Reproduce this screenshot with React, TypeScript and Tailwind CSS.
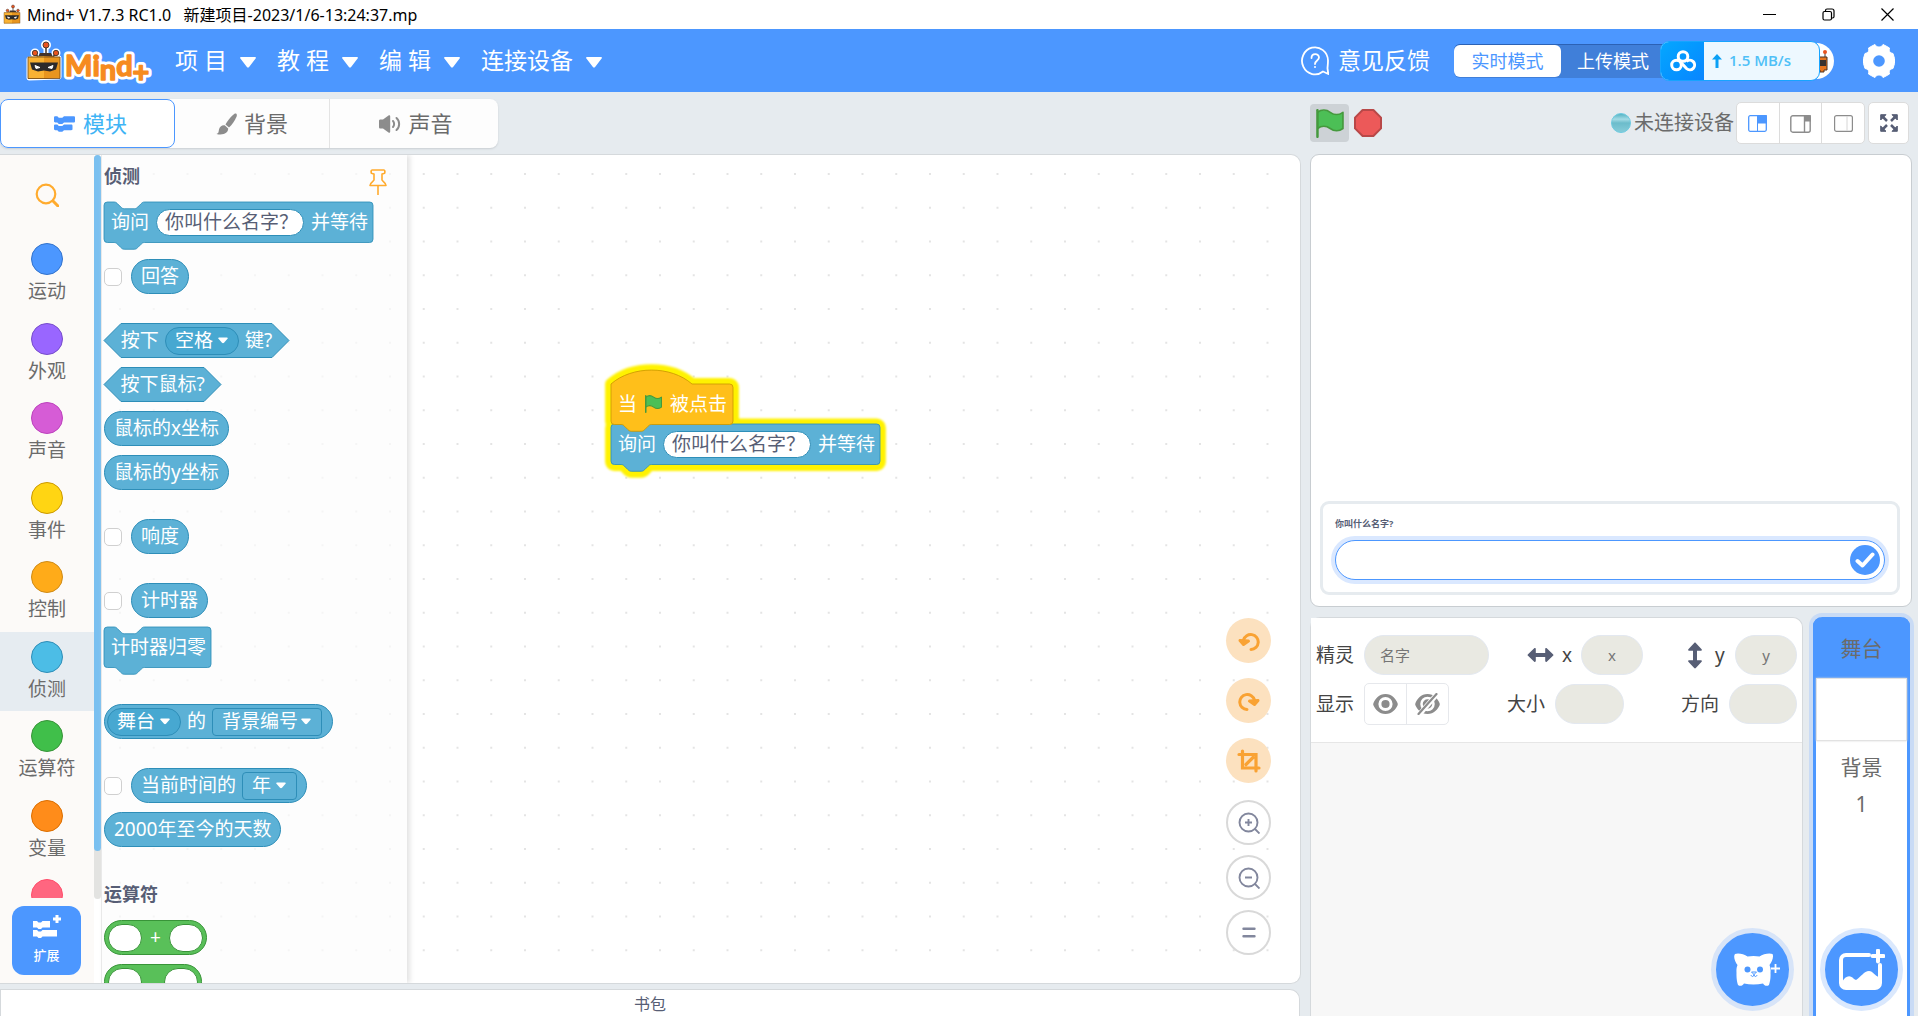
import type { ReactNode } from "react";

// One Blockly unit on screen at the current workspace zoom.
const ZOOM = 0.84375;

const NOTCH_TOP =
  "c2 0 3 1 4 2l4 4c1 1 2 2 4 2h12c2 0 3-1 4-2l4-4c1-1 2-2 4-2";
const NOTCH_BOTTOM =
  "c-2 0-3 1-4 2l-4 4c-1 1-2 2-4 2h-12c-2 0-3-1-4-2l-4-4c-1-1-2-2-4-2";

const CATEGORIES = [
  { label: "运动", dot: "bg-[#4c97ff] border-[#3373cc]" },
  { label: "外观", dot: "bg-[#9966ff] border-[#774dcb]" },
  { label: "声音", dot: "bg-[#d65cd6] border-[#bd42bd]" },
  { label: "事件", dot: "bg-[#ffd513] border-[#cc9900]" },
  { label: "控制", dot: "bg-[#ffab19] border-[#cf8b17]" },
  { label: "侦测", dot: "bg-[#4cbde6] border-[#2e8eb8]", selected: true },
  { label: "运算符", dot: "bg-[#40bf4a] border-[#389438]" },
  { label: "变量", dot: "bg-[#ff8c1a] border-[#db6e00]" },
  { label: "", dot: "bg-[#ff6680] border-[#ff4d6a]" },
];

const MENUS = ["项 目", "教 程", "编 辑", "连接设备"];

function stackPath(width: number) {
  const w = width / ZOOM;
  return `M0 4a4 4 0 0 1 4-4h8${NOTCH_TOP}H${w - 4}a4 4 0 0 1 4 4v40a4 4 0 0 1-4 4H48${NOTCH_BOTTOM}H4a4 4 0 0 1-4-4z`;
}

function hatPath(width: number) {
  const w = width / ZOOM;
  return `M0 0c25-22 71-22 96 0H${w - 4}a4 4 0 0 1 4 4v40a4 4 0 0 1-4 4H48${NOTCH_BOTTOM}H4a4 4 0 0 1-4-4z`;
}

function Caret() {
  return (
    <svg viewBox="0 0 10 7" className="h-[7px] w-[10px]" aria-hidden>
      <path d="M1 .5h8c.8 0 1 .8.5 1.3L6 5.8c-.6.6-1.4.6-2 0L.5 1.8C0 1.3.2.5 1 .5z" fill="#fff" />
    </svg>
  );
}

function Flag({ className }: { className: string }) {
  return (
    <svg viewBox="0 0 16.63 17.5" className={className} aria-hidden>
      <path
        d="M.75 2A6.44 6.44 0 0 1 8.44 2a6.44 6.44 0 0 0 7.69 0v9.76a6.44 6.44 0 0 1-7.69 0 6.44 6.44 0 0 0-7.69 0"
        fill="#4cbf56"
        stroke="#45993d"
        strokeLinejoin="round"
      />
      <path d="M.75 16.8V.7" stroke="#45993d" strokeWidth="1.5" strokeLinecap="round" />
    </svg>
  );
}

function StackBlock({ width, children }: { width: number; children: ReactNode }) {
  return (
    <div className="relative h-12" style={{ width }}>
      <svg className="absolute inset-0 h-full w-full overflow-visible" aria-hidden>
        <path d={stackPath(width)} transform={`scale(${ZOOM})`} fill="#5cb1d6" stroke="#2e8eb8" />
      </svg>
      <div className="relative flex h-[41px] items-center gap-[7px] whitespace-nowrap px-[7px]">
        {children}
      </div>
    </div>
  );
}

function AskBlock({ id }: { id: string }) {
  return (
    <StackBlock width={269}>
      <label htmlFor={id}>询问</label>
      <input
        id={id}
        defaultValue="你叫什么名字？"
        className="h-[27px] w-[148px] rounded-full border border-[#2e8eb8] bg-white pl-2 text-[#575e75] outline-none"
      />
      <span>并等待</span>
    </StackBlock>
  );
}

function Reporter({ children }: { children: ReactNode }) {
  return (
    <div className="flex h-[35px] w-fit items-center gap-[6px] whitespace-nowrap rounded-full border border-[#2e8eb8] bg-[#5cb1d6] px-[9px]">
      {children}
    </div>
  );
}

function BooleanBlock({ width, children }: { width: number; children: ReactNode }) {
  return (
    <div className="relative h-[35px]" style={{ width }}>
      <svg className="absolute inset-0 h-full w-full overflow-visible" aria-hidden>
        <path
          d={`M17 .5H${width - 17}L${width} 17.5 ${width - 17} 34.5H17L0 17.5z`}
          fill="#5cb1d6"
          stroke="#2e8eb8"
        />
      </svg>
      <div className="relative flex h-full items-center justify-center gap-[6px] whitespace-nowrap">
        {children}
      </div>
    </div>
  );
}

function FieldSelect({ label, value, className }: { label: string; value: string; className: string }) {
  return (
    <span className="relative flex items-center">
      <select
        aria-label={label}
        className={`h-7 appearance-none border border-[#2e8eb8] pl-[9px] leading-none text-white outline-none ${className}`}
      >
        <option>{value}</option>
      </select>
      <span className="pointer-events-none absolute right-[11px]">
        <Caret />
      </span>
    </span>
  );
}

function MonitorRow({ label, children }: { label: string; children: ReactNode }) {
  return (
    <div className="flex items-center gap-[9px]">
      <input
        type="checkbox"
        aria-label={label}
        className="size-[18px] appearance-none rounded-[5px] border border-[#d0d0d0] bg-white"
      />
      {children}
    </div>
  );
}

function OperatorBlock({ children }: { children: ReactNode }) {
  return (
    <div className="flex h-[35px] w-fit shrink-0 items-center gap-2 rounded-full border border-[#389438] bg-[#59c059] px-[3px]">
      <input aria-label="左" className="h-7 w-[34px] rounded-full border border-[#389438] bg-white" />
      {children}
      <input aria-label="右" className="h-7 w-[34px] rounded-full border border-[#389438] bg-white" />
    </div>
  );
}

function RobotHead({ className }: { className: string }) {
  return (
    <svg viewBox="0 0 36 42" className={className} aria-hidden>
      <g stroke="#fff" strokeWidth="5" strokeLinejoin="round" fill="#fff">
        <path d="M3 19l30-1v19l-30 1zM9 12v5M20 5v10M30 12v4" />
        <circle cx="9" cy="13" r="2" />
        <circle cx="20" cy="5" r="2.5" />
        <circle cx="30" cy="13" r="2" />
      </g>
      <path d="M9 13l3 4M20 5v10M30 13l-3 4" stroke="#43332a" strokeWidth="1.5" />
      <path d="M12 17l2-4h11l2 4z" fill="#43332a" />
      <path d="M2 17l16-1v23H2z" fill="#f9b233" />
      <path d="M18 16l16 1v21l-16 1z" fill="#e8951f" />
      <path d="M2 17h32v21.500H2z" fill="none" stroke="#6b4418" strokeWidth=".8" />
      <path d="M4 22.500h28l-2 7-6 2-6-1-6 1-6-2z" fill="#2c2a2b" />
      <path d="M9 25.500l5 2-4 1zM27 25.500l-5 2 4 1z" fill="#fff" stroke="#fff" />
      <g fill="#e9541f" stroke="#43332a" strokeWidth=".9">
        <circle cx="9" cy="13" r="2.700" />
        <circle cx="20" cy="5" r="3" />
        <circle cx="30" cy="13" r="2.700" />
      </g>
    </svg>
  );
}

function Logo() {
  return (
    <div className="flex items-end">
      <RobotHead className="h-[42px] w-9" />
      <svg viewBox="0 0 86 36" className="h-9 w-[86px] overflow-visible" role="img" aria-label="Mind+">
        <text
          x="3"
          y="30 30 34 30 36"
          fontFamily="Lato, sans-serif"
          fontSize="29"
          fontWeight="700"
          fill="none"
          stroke="#fff"
          strokeWidth="7"
          strokeLinejoin="round"
          aria-hidden
        >
          Mind+
        </text>
        <text
          x="3"
          y="30 30 34 30 36"
          fontFamily="Lato, sans-serif"
          fontSize="29"
          fontWeight="700"
          fill="#f68b1f"
          stroke="#f68b1f"
          strokeWidth="1.500"
          strokeLinejoin="round"
        >
          Mind+
        </text>
      </svg>
    </div>
  );
}

function TitleBar() {
  return (
    <div className="flex h-[29px] shrink-0 items-center bg-white pl-[2px] pr-6 text-black">
      <RobotHead className="h-[21px] w-[20px]" />
      <span className="ml-[5px] whitespace-pre text-[16px]">
        {"Mind+ V1.7.3 RC1.0   新建项目-2023/1/6-13:24:37.mp"}
      </span>
      <div className="ml-auto flex items-center gap-[46px]">
        <button type="button" aria-label="最小化">
          <svg viewBox="0 0 13 13" className="size-[13px]" stroke="#000"><path d="M0 6.500h13" /></svg>
        </button>
        <button type="button" aria-label="还原">
          <svg viewBox="0 0 13 13" className="size-[13px]" stroke="#000" strokeWidth="1.200" fill="none">
            <rect x="1" y="3.500" width="8.500" height="8.500" rx="1.500" />
            <path d="M3.500 3.500V2.500a1.500 1.500 0 0 1 1.500-1.500h5a2 2 0 0 1 2 2v5.500a1.500 1.500 0 0 1-1.500 1.500h-1" />
          </svg>
        </button>
        <button type="button" aria-label="关闭">
          <svg viewBox="0 0 13 13" className="size-[13px]" stroke="#000" strokeWidth="1.200"><path d="M.5.5l12 12M12.500.5l-12 12" /></svg>
        </button>
      </div>
    </div>
  );
}

function Header() {
  return (
    <header className="flex h-[63px] shrink-0 items-center bg-[#4c97ff] pl-[26px] pr-[23px] text-[23px] text-white">
      <Logo />
      <nav className="ml-[27px] flex items-center gap-[21px]">
        {MENUS.map((menu) => (
          <button key={menu} type="button" className="flex items-center gap-[13px] whitespace-nowrap">
            {menu}
            <svg viewBox="0 0 16 11" className="mt-1 h-[11px] w-4" aria-hidden>
              <path d="M1 0h14c1 0 1.200.8.6 1.500l-6.500 8.500c-.6.8-1.600.8-2.200 0L.4 1.500C-.2.8 0 0 1 0z" fill="#fff" />
            </svg>
          </button>
        ))}
      </nav>

      <button type="button" className="ml-auto flex items-center gap-[9px] whitespace-nowrap">
        <svg viewBox="0 0 28 30" className="h-[30px] w-7" fill="none" stroke="#fff" strokeWidth="1.800" aria-hidden>
          <path d="M22 25.500A13 13.500 0 1 1 27 14.500c0 4-.5 6-.5 8l.8 5.500z" strokeLinejoin="round" />
          <path d="M10.500 12c0-5 7.500-5 7.500-.5 0 3-4 3-4 6.500" strokeLinecap="round" />
          <circle cx="14" cy="21" r="1" fill="#fff" stroke="none" />
        </svg>
        意见反馈
      </button>

      <div className="ml-6 flex h-[34px] w-[214px] items-center rounded-md border-t border-[#2c62b5] bg-[#407fd9] text-[18px]">
        <button type="button" className="h-8 w-[107px] rounded-md bg-white text-[#4c97ff]">
          实时模式
        </button>
        <button type="button" className="pl-4">
          上传模式
        </button>
      </div>
      <div className="relative z-10 -ml-2 flex h-10 w-[160px] items-center overflow-hidden rounded-[9px] border border-[#17a4ff] bg-[#edf8ff]">
        <div className="flex h-full w-[43px] items-center justify-center bg-linear-to-br from-[#06a7ff] to-[#0b85ff]">
          <svg viewBox="0 0 26 22" className="h-[22px] w-[26px]" fill="none" stroke="#fff" strokeWidth="3" aria-hidden>
            <circle cx="13" cy="6.500" r="4.800" />
            <circle cx="6.500" cy="15" r="4.800" />
            <path d="M10 11.500l6.500 7a4.800 4.800 0 1 0 0-7" />
          </svg>
        </div>
        <svg viewBox="0 0 10 14" className="ml-2 h-[14px] w-[10px]" aria-hidden>
          <path d="M5 0l5 5.500H6.500V14h-3V5.500H0z" fill="#0aa0f5" />
        </svg>
        <span className="ml-[7px] font-['Open_Sans','Noto_Sans_CJK_SC',sans-serif] text-[15px] font-semibold text-[#4fc0f7]">
          1.5 MB/s
        </span>
      </div>
      <div className="-ml-[22px] flex size-9 items-center justify-end overflow-hidden rounded-full bg-white">
        <svg viewBox="0 0 14 24" className="mr-[5px] h-6 w-[14px]" aria-hidden>
          <path d="M1 8h11v13H9v2H5v-2H1z" fill="#e8761f" stroke="#4a3527" />
          <path d="M1 11h10v6H1z" fill="#3a3330" />
          <path d="M10 8V4" stroke="#4a3527" />
          <circle cx="10" cy="3" r="2" fill="#e9541f" />
        </svg>
      </div>
      <button type="button" aria-label="设置" className="ml-[29px]">
        <svg viewBox="0 0 32 34" className="h-[34px] w-8" aria-hidden>
          <path
            d="M9 2l3-1.500c1 2 2.500 2.500 4 2.500s3-.5 4-2.500L23 2l3.500 2c-1 3 .5 5 3.500 5.500l1.500 5v5L30 24.500c-3 .5-4.500 2.500-3.500 5.500L23 32l-3 1.500c-1-2-2.500-2.500-4-2.500s-3 .5-4 2.500L9 32l-3.500-2c1-3-.5-5-3.500-5.500L.5 19.500v-5L2 9.500c3-.5 4.500-2.500 3.500-5.500z"
            fill="#fff"
            stroke="#fff"
            strokeLinejoin="round"
          />
          <circle cx="16" cy="17" r="5.800" fill="#4c97ff" />
        </svg>
      </button>
    </header>
  );
}

function BlocksIcon({ className }: { className: string }) {
  return (
    <svg viewBox="0 0 21 16" className={className} fill="currentColor" aria-hidden>
      <path d="M0 1.500C0 .6.6.3 1.300.3h2l1.500 1.500h3.500L10 .3h9.700c.8 0 1.300.5 1.300 1.200v3.800c0 .8-.5 1.200-1.300 1.200H10L8.300 8H4.800L3.300 6.500h-2C.5 6.500 0 6 0 5.300z" />
      <path d="M0 9.500c0-.7.6-1 1.300-1h2L4.800 10h3.500L10 8.500h7.200c.8 0 1.300.5 1.300 1.200v3.300c0 .8-.5 1.200-1.300 1.200H10L8.300 15.700H4.800l-1.500-1.500h-2C.5 14.200 0 13.800 0 13z" />
    </svg>
  );
}

function EditorTabs() {
  return (
    <div role="tablist" className="mt-[7px] flex h-[49px] w-[498px] rounded-lg bg-[#fdfdfd] text-[22px] text-[#6b6b6b] shadow-[0_1px_2px_#c9ced2]">
      <button
        type="button"
        role="tab"
        aria-selected
        className="flex w-[175px] items-center justify-center gap-2 rounded-lg border border-[#4c97ff] bg-white pl-[6px] text-[#3fb4f5]"
      >
        <BlocksIcon className="h-4 w-[21px] text-[#4c97ff]" />
        模块
      </button>
      <button
        type="button"
        role="tab"
        aria-selected={false}
        className="flex w-[154px] items-center justify-center gap-[7px]"
      >
        <svg viewBox="0 0 21 22" className="h-[22px] w-[21px]" fill="#8c8c8c" aria-hidden>
          <path d="M20 .5c1 .5 1 2 .6 3-1.600 4-4.600 8.500-7.600 11l-3.500-3C11.500 7.500 15.500 3 18.500.8c.5-.3 1-.5 1.500-.3z" />
          <path d="M8.700 12.300l3.500 3.200c.3 4-4.700 7.500-11.700 5.500C3 20 2.500 18.500 3 16.500c.6-2.700 3-4.700 5.700-4.200z" />
        </svg>
        背景
      </button>
      <button
        type="button"
        role="tab"
        aria-selected={false}
        className="flex w-[169px] items-center justify-center gap-[7px] border-l border-[#e4e4e4] pl-1"
      >
        <svg viewBox="0 0 22 18" className="h-[18px] w-[22px]" aria-hidden>
          <path d="M0 6c0-1 .5-1.500 1.500-1.500H4L9.500.5c1-.6 1.700 0 1.700 1v15c0 1-.7 1.600-1.700 1L4 13.500H1.500C.5 13.500 0 13 0 12z" fill="#8c8c8c" />
          <path d="M14 6c1.500 1.500 1.500 4.500 0 6M17.500 3c3.500 3 3.500 9 0 12" fill="none" stroke="#8c8c8c" strokeWidth="2" strokeLinecap="round" />
        </svg>
        声音
      </button>
    </div>
  );
}

function CategoryRail() {
  return (
    <div className="flex w-[94px] shrink-0 flex-col bg-[#fcfaf8] text-[19px] text-[#6b6b6b]">
      <div className="h-[743px] shrink-0 overflow-hidden">
        <div className="flex h-[79px] items-center justify-center">
          <button type="button" aria-label="搜索">
            <svg viewBox="0 0 24 24" className="size-6" fill="none" stroke="#ffab2e" strokeWidth="2.200" aria-hidden>
              <circle cx="11" cy="11" r="9.300" />
              <path d="M18 18l5 5" strokeWidth="3" strokeLinecap="round" />
            </svg>
          </button>
        </div>
        <div className="grid h-[716px] auto-rows-fr">
          {CATEGORIES.map((category) => (
            <button
              key={category.dot}
              type="button"
              className={`flex flex-col items-center pt-[9px] ${category.selected ? "bg-[#e6ecf1]" : ""}`}
            >
              <span className={`size-8 shrink-0 rounded-full border ${category.dot}`} />
              <span className="mt-1 leading-6">{category.label}</span>
            </button>
          ))}
        </div>
      </div>
      <button
        type="button"
        className="ml-3 mt-2 flex size-[69px] shrink-0 flex-col items-center rounded-xl bg-[#4c97ff] pt-2 text-[13px] font-medium text-white"
      >
        <svg viewBox="0 0 30 26" className="h-[26px] w-[30px]" fill="#fff" aria-hidden>
          <path d="M1 7h4l1.500 1.500H9L10.500 7H18v6.500h-7.500L9 15H6.500L5 13.500H1zM1 16h4l1.500 1.500H9L10.500 16H25v6.500H10.500L9 24H6.500L5 22.500H1z" />
          <path d="M23.500 1h3v2.500H29v3h-2.500V9h-3V6.500H21v-3h2.500z" />
        </svg>
        <span className="mt-[6px]">扩展</span>
      </button>
    </div>
  );
}

function Flyout() {
  return (
    <div className="relative flex w-[306px] shrink-0 flex-col overflow-hidden border-l border-[#e9e9e9] bg-[#fcfcfc]/70 pl-[2px] text-[19px] text-white shadow-[3px_0_5px_#e3e3e3]">
      <div className="mb-3 mt-[7px] flex h-7 shrink-0 items-center justify-between text-[#575e75]">
        <h2 className="text-[18px] font-bold">侦测</h2>
        <button type="button" aria-label="固定" className="mr-5 mt-3">
          <svg viewBox="0 0 18 26" className="h-[26px] w-[18px]" fill="none" stroke="#ffab2e" strokeWidth="1.600" strokeLinejoin="round" aria-hidden>
            <path d="M3 1h12c1.300 0 1.300 3.500 0 3.500l-2 .5v6c0 1 4 2.500 4 5.500H1c0-3 4-4.500 4-5.500V5l-2-.5C1.700 4.500 1.700 1 3 1zM9 16.500V26" />
          </svg>
        </button>
      </div>
      <div className="flex flex-col gap-[29px]">
        <div className="flex flex-col gap-[9px]">
          <AskBlock id="flyout-ask" />
          <MonitorRow label="回答">
            <Reporter>回答</Reporter>
          </MonitorRow>
        </div>
        <div className="flex flex-col gap-[9px]">
          <BooleanBlock width={185}>
            <span>按下</span>
            <FieldSelect label="按键" value="空格" className="w-[74px] rounded-full bg-[#47a8d1]" />
            <span>键?</span>
          </BooleanBlock>
          <BooleanBlock width={117}>按下鼠标?</BooleanBlock>
          <Reporter>鼠标的x坐标</Reporter>
          <Reporter>鼠标的y坐标</Reporter>
        </div>
        <MonitorRow label="响度">
          <Reporter>响度</Reporter>
        </MonitorRow>
        <div className="flex flex-col gap-[9px]">
          <MonitorRow label="计时器">
            <Reporter>计时器</Reporter>
          </MonitorRow>
          <StackBlock width={107}>计时器归零</StackBlock>
        </div>
        <div className="flex h-[35px] w-[229px] items-center gap-[6px] rounded-full border border-[#2e8eb8] bg-[#5cb1d6] pl-[2px]">
          <FieldSelect label="对象" value="舞台" className="w-[74px] rounded-full bg-[#47a8d1]" />
          <span>的</span>
          <FieldSelect label="属性" value="背景编号" className="w-[110px] rounded bg-[#5cb1d6]" />
        </div>
        <div className="flex flex-col gap-[9px]">
          <MonitorRow label="当前时间">
            <Reporter>
              当前时间的
              <FieldSelect label="时间单位" value="年" className="w-[55px] rounded bg-[#5cb1d6]" />
            </Reporter>
          </MonitorRow>
          <Reporter>2000年至今的天数</Reporter>
        </div>
      </div>
      <h2 className="mb-3 mt-[33px] h-7 shrink-0 text-[18px] font-bold leading-7 text-[#575e75]">运算符</h2>
      <div className="flex flex-col gap-[9px]">
        <OperatorBlock>
          <span>+</span>
        </OperatorBlock>
        <OperatorBlock>
          <span className="w-[6px]" />
        </OperatorBlock>
      </div>
    </div>
  );
}

function Script() {
  return (
    <div className="absolute left-[611px] top-[229px] text-[19px] text-white">
      <svg className="absolute inset-0 h-full w-full overflow-visible" aria-hidden>
        <g transform={`scale(${ZOOM})`}>
          <g stroke="#fff200" strokeWidth="14" strokeLinejoin="round" fill="#fff200" className="blur-[1px]">
            <path d={hatPath(122)} />
            <path d={stackPath(269)} transform="translate(0 48)" />
          </g>
        </g>
      </svg>
      <div className="relative h-[40px] w-[122px]">
        <svg className="absolute inset-0 z-10 h-full w-full overflow-visible" aria-hidden>
          <path d={hatPath(122)} transform={`scale(${ZOOM})`} fill="#ffbf1a" stroke="#cc9900" />
        </svg>
        <div className="relative z-10 flex h-full items-center whitespace-nowrap pl-[7px]">
          当
          <Flag className="ml-2 mr-2 h-[18px] w-[17px]" />
          被点击
        </div>
      </div>
      <AskBlock id="script-ask" />
    </div>
  );
}

function WorkspaceControls() {
  return (
    <div className="absolute bottom-7 right-[29px] flex flex-col items-center gap-[10px]">
      <div className="mb-[7px] flex flex-col gap-[15px]">
        <button type="button" aria-label="撤销" className="flex size-[45px] items-center justify-center rounded-full bg-[#fce1bf]">
          <svg viewBox="0 0 24 20" className="h-5 w-6" fill="none" stroke="#f9a233" strokeWidth="3" strokeLinecap="round" strokeLinejoin="round" aria-hidden>
            <path d="M6.500 9a7.500 7.500 0 1 1 7.500 9.500" />
            <path d="M3 9.500l3.500 4 5-3.500z" fill="#f9a233" />
          </svg>
        </button>
        <button type="button" aria-label="重做" className="flex size-[45px] items-center justify-center rounded-full bg-[#fce1bf]">
          <svg viewBox="0 0 24 20" className="h-5 w-6" fill="none" stroke="#f9a233" strokeWidth="3" strokeLinecap="round" strokeLinejoin="round" aria-hidden>
            <path d="M17.500 9a7.500 7.500 0 1 0-7.500 9.500" />
            <path d="M21 9.500l-3.500 4-5-3.500z" fill="#f9a233" />
          </svg>
        </button>
        <button type="button" aria-label="裁剪" className="flex size-[45px] items-center justify-center rounded-full bg-[#fce1bf]">
          <svg viewBox="0 0 24 24" className="size-6" fill="none" stroke="#f9a233" strokeWidth="3.200" strokeLinecap="round" aria-hidden>
            <path d="M2 5.500h17v16.500M5.500 2v17H22M9 15.500l7-7" />
          </svg>
        </button>
      </div>
      <button type="button" aria-label="放大" className="flex size-[45px] items-center justify-center rounded-full border-2 border-[#d9d9d9] bg-white">
        <svg viewBox="0 0 22 22" className="size-[22px]" fill="none" stroke="#82879d" strokeWidth="1.900" aria-hidden>
          <circle cx="10.500" cy="10.500" r="9" />
          <path d="M16.500 16.500l5 5M7 10.500h7M10.500 7v7" />
        </svg>
      </button>
      <button type="button" aria-label="缩小" className="flex size-[45px] items-center justify-center rounded-full border-2 border-[#d9d9d9] bg-white">
        <svg viewBox="0 0 22 22" className="size-[22px]" fill="none" stroke="#82879d" strokeWidth="1.900" aria-hidden>
          <circle cx="10.500" cy="10.500" r="9" />
          <path d="M16.500 16.500l5 5M7 10.500h7" />
        </svg>
      </button>
      <button type="button" aria-label="重置缩放" className="flex size-[45px] items-center justify-center rounded-full border-2 border-[#d9d9d9] bg-white">
        <svg viewBox="0 0 14 11" className="h-[11px] w-[14px]" stroke="#82879d" strokeWidth="2.400" strokeLinecap="round" aria-hidden>
          <path d="M1.500 1.700h11M1.500 9.200h11" />
        </svg>
      </button>
    </div>
  );
}

function Workspace() {
  return (
    <div className="relative mt-[6px] flex min-h-0 flex-1 overflow-hidden rounded-r-[10px] border border-l-0 border-[#d5d9dc] bg-white">
      <svg className="absolute inset-0 h-full w-full" aria-hidden>
        <pattern id="grid" x="17.750" y="18" width="33.750" height="33.750" patternUnits="userSpaceOnUse">
          <path d="M0 1h2M1 0v2" stroke="#dcdcdc" />
        </pattern>
        <rect width="100%" height="100%" fill="url(#grid)" />
      </svg>
      <div className="relative flex">
        <CategoryRail />
        <div className="h-[744px] w-[7px] rounded-full bg-[#e3e3e1]">
          <div className="h-[696px] rounded-full bg-[#7ac0f0]" />
        </div>
        <Flyout />
      </div>
      <Script />
      <WorkspaceControls />
    </div>
  );
}

function StageToolbar() {
  return (
    <div className="flex h-[62px] shrink-0 items-center pr-[3px] text-[20px] text-[#6b6b6b]">
      <button type="button" aria-label="运行" className="flex h-[38px] w-[39px] items-center justify-center rounded bg-[#cdd2d6]">
        <Flag className="h-[29px] w-[28px]" />
      </button>
      <button type="button" aria-label="停止" className="ml-[5px]">
        <svg viewBox="0 0 14 14" className="size-7" aria-hidden>
          <path d="M4.300.5h5.400l3.800 3.800v5.400l-3.800 3.800H4.300L.5 9.700V4.300z" fill="#ec5959" stroke="#b84848" strokeLinejoin="round" />
        </svg>
      </button>
      <svg viewBox="0 0 20 20" className="ml-auto size-5" aria-hidden>
        <linearGradient id="ball" x1="0" y1="0" x2="0" y2="1">
          <stop offset="0" stopColor="#4fb0c0" />
          <stop offset=".3" stopColor="#a4dbe5" />
          <stop offset=".5" stopColor="#6cbccb" />
          <stop offset="1" stopColor="#86ccd9" />
        </linearGradient>
        <circle cx="10" cy="10" r="9.500" fill="url(#ball)" stroke="#6ecbe0" />
      </svg>
      <span className="ml-[3px] whitespace-nowrap">未连接设备</span>
      <div className="ml-[2px] flex h-[42px] w-[129px] divide-x divide-[#dcdcdc] rounded-[5px] border border-[#dcdcdc] bg-white">
        <button type="button" aria-label="小舞台" className="flex flex-1 items-center justify-center">
          <svg viewBox="0 0 19 17" className="h-[17px] w-[19px]" fill="none" stroke="#4c97ff" aria-hidden>
            <rect x=".7" y=".7" width="17.600" height="15.600" rx="1.500" strokeWidth="1.300" />
            <path d="M9.500 0H17a2 2 0 0 1 2 2v6H9.500z" fill="#4c97ff" />
            <path d="M9.500 8v9" />
          </svg>
        </button>
        <button type="button" aria-label="大舞台" className="flex flex-1 items-center justify-center">
          <svg viewBox="0 0 21 18" className="mt-[2px] h-[18px] w-[21px]" fill="none" stroke="#8c8c8c" aria-hidden>
            <rect x=".8" y=".8" width="19.400" height="16.400" rx="2" strokeWidth="1.400" />
            <path d="M14.500 0H19a2 2 0 0 1 2 2v4h-6.500z" fill="#8c8c8c" />
            <path d="M14.500 0v18" strokeWidth="1.400" />
          </svg>
        </button>
        <button type="button" aria-label="隐藏舞台" className="flex flex-1 items-center justify-center">
          <svg viewBox="0 0 19 17" className="h-[17px] w-[19px]" fill="none" stroke="#8c8c8c" aria-hidden>
            <rect x=".6" y=".6" width="17.800" height="15.800" rx="2" strokeWidth="1.200" />
            <path d="M13 1v15" stroke="#d6d6d6" />
          </svg>
        </button>
      </div>
      <button type="button" aria-label="全屏" className="ml-[3px] flex h-[42px] w-[41px] items-center justify-center rounded-[5px] border border-[#dcdcdc] bg-white">
        <svg viewBox="0 0 18 18" className="size-[18px]" fill="#575e75" stroke="#575e75" strokeLinejoin="round" aria-hidden>
          <path d="M.7.7h5.300L.7 6zM17.300.7V6L12 .7zM.7 17.300V12L6 17.300zM17.300 17.300H12l5.300-5.300z" />
          <path d="M2 2l5 5M16 2l-5 5M2 16l5-5M16 16l-5-5" strokeWidth="2.500" />
        </svg>
      </button>
    </div>
  );
}

function Stage() {
  return (
    <div className="flex h-[453px] shrink-0 flex-col justify-end rounded-[9px] border border-[#c8cdd1] bg-white pb-[11px] pl-[9px] pr-[11px]">
      <div className="rounded-[9px] border-[3px] border-[#e6ebef] px-3 pb-3 pt-[13px]">
        <label htmlFor="answer" className="block text-[9px] font-bold leading-[13px] text-[#575e75]">
          你叫什么名字?
        </label>
        <div className="relative mt-[10px]">
          <input
            id="answer"
            className="block h-10 w-full rounded-full border border-[#4c97ff] bg-white px-4 text-base shadow-[0_0_0_4px_#dae8ff] outline-none"
          />
          <button
            type="button"
            aria-label="提交"
            className="absolute right-[5px] top-[5px] flex size-[30px] items-center justify-center rounded-full bg-[#4c97ff]"
          >
            <svg viewBox="0 0 20 16" className="h-4 w-5" fill="none" stroke="#fff" strokeWidth="4" strokeLinecap="round" strokeLinejoin="round" aria-hidden>
              <path d="M2.500 9l5 4.500 10-11" />
            </svg>
          </button>
        </div>
      </div>
    </div>
  );
}

function SpriteInfo() {
  const box = "h-10 rounded-full border border-[#e3e8f0] bg-[#e9e9e2] text-[15px] placeholder:text-[#757575]";
  return (
    <div className="flex h-[125px] shrink-0 flex-col gap-[9px] rounded-tr-[10px] border-b border-[#e6e6e6] bg-white px-[5px] pt-[17px] text-[19px] text-[#444]">
      <div className="flex h-10 items-center">
        <label htmlFor="sprite-name">精灵</label>
        <input id="sprite-name" placeholder="名字" className={`ml-[10px] w-[125px] pl-[15px] ${box}`} />
        <svg viewBox="0 0 27 14" className="ml-auto h-[14px] w-[27px]" fill="#575e75" aria-hidden>
          <path d="M1 6.200L7 .6c1-1 1.800-.4 1.800.8V5h9.400V1.400c0-1.200.8-1.800 1.800-.8l6 5.600c.6.5.6 1.100 0 1.600l-6 5.600c-1 1-1.800.4-1.800-.8V9H8.800v3.600c0 1.200-.8 1.800-1.800.8L1 7.800c-.6-.5-.6-1.100 0-1.600z" />
        </svg>
        <label htmlFor="sprite-x" className="ml-2 w-[19px]">x</label>
        <input id="sprite-x" placeholder="x" className={`w-[62px] text-center ${box}`} />
        <svg viewBox="0 0 14 27" className="ml-[45px] h-[27px] w-[14px]" fill="#575e75" aria-hidden>
          <path d="M6.200 1L.6 7c-1 1-.4 1.800.8 1.800H5v9.400H1.400c-1.200 0-1.800.8-.8 1.800l5.600 6c.5.6 1.100.6 1.600 0l5.600-6c1-1 .4-1.800-.8-1.800H9V8.800h3.600c1.200 0 1.800-.8.8-1.800L7.800 1c-.5-.6-1.100-.6-1.600 0z" />
        </svg>
        <label htmlFor="sprite-y" className="ml-[13px] w-5">y</label>
        <input id="sprite-y" placeholder="y" className={`w-[62px] text-center ${box}`} />
      </div>
      <div className="flex h-10 items-center">
        <span>显示</span>
        <div className="ml-[10px] flex h-[42px] w-[85px] divide-x divide-[#e6e8ec] rounded-[5px] border border-[#e6e8ec]">
          <button type="button" aria-label="显示角色" className="flex flex-1 items-center justify-center">
            <svg viewBox="0 0 25 20" className="h-5 w-[25px]" aria-hidden>
              <path d="M12.500 0C19 0 23 5 24.500 9c.4 1 .4 1.500 0 2.500C23 15 19 20 12.500 20S2 15 .5 11.500c-.4-1-.4-1.500 0-2.500C2 5 6 0 12.500 0z" fill="#8c8c8c" />
              <circle cx="12.500" cy="10" r="5.600" fill="none" stroke="#fff" strokeWidth="3" />
            </svg>
          </button>
          <button type="button" aria-label="隐藏角色" className="flex flex-1 items-center justify-center">
            <svg viewBox="0 0 25 22" className="h-[22px] w-[25px]" aria-hidden>
              <path d="M12.500 1C19 1 23 6 24.500 10c.4 1 .4 1.500 0 2.500C23 16 19 21 12.500 21S2 16 .5 12.500c-.4-1-.4-1.500 0-2.500C2 6 6 1 12.500 1z" fill="#8c8c8c" />
              <circle cx="12.500" cy="11" r="6" fill="none" stroke="#fff" strokeWidth="2.500" />
              <path d="M3.500 22.500l19-22" stroke="#fff" strokeWidth="5" />
              <path d="M3.500 21l18-20" stroke="#8c8c8c" strokeWidth="2.200" strokeLinecap="round" />
            </svg>
          </button>
        </div>
        <label htmlFor="sprite-size" className="ml-auto">大小</label>
        <input id="sprite-size" className={`ml-[10px] w-[69px] text-center ${box}`} />
        <label htmlFor="sprite-dir" className="ml-[57px]">方向</label>
        <input id="sprite-dir" className={`ml-[10px] w-[68px] text-center ${box}`} />
      </div>
    </div>
  );
}

function SpritePane() {
  return (
    <div className="relative flex min-w-0 flex-1 flex-col rounded-t-[10px] border border-b-0 border-[#d5d9dc] bg-[#f7f7f7]">
      <SpriteInfo />
      <button
        type="button"
        aria-label="添加角色"
        className="absolute bottom-[5px] right-2 flex size-[83px] items-center justify-center rounded-full border-[5px] border-[#d7e4f8] bg-[#4c97ff]"
      >
        <svg viewBox="0 0 46 33" className="ml-2 h-[33px] w-[46px]" aria-hidden>
          <path
            d="M1 1c3-1.500 9 0 12.500 2.500 3.500-.8 8.500-.8 12 0C29 1 35.500-.5 38.500 1c1.500 2.500-.5 8-3 11 1 2.500 1.300 4.500 1 8 .3 5-.5 9-1.500 12-2 1.500-4.500 1-6-1.500-6 1.300-13 1.300-19 0C8.500 33 6 33.500 4 32c-1-3-1.700-7-1.500-12-.2-3.500 0-5.500 1-8C1 9-1 3.500 1 1z"
            fill="#fff"
          />
          <circle cx="13.500" cy="16.500" r="3" fill="#4c97ff" />
          <circle cx="26" cy="16.500" r="3" fill="#4c97ff" />
          <path d="M17.500 19h5l-2.500 2.500zM20 21v2M17 22c.5 2 2.500 2 3 0 .5 2 2.500 2 3 0" fill="none" stroke="#4c97ff" />
          <path d="M41.500 11v9M37 15.500h9" stroke="#fff" strokeWidth="1.800" />
        </svg>
      </button>
    </div>
  );
}

function StageSelector() {
  return (
    <div className="relative mr-[2px] flex w-[97px] shrink-0 flex-col items-center rounded-t-[9px] border-x-[3px] border-[#4c97ff] bg-white text-[21px] text-[#6b6b6b] shadow-[0_0_0_4px_#c9dbf5]">
      <div className="-mx-[3px] flex h-[61px] w-[97px] items-center justify-center rounded-t-[9px] bg-[#4c97ff] pt-[2px]">
        舞台
      </div>
      <div className="h-[63px] w-full border border-[#e2e2e2] bg-white shadow-[0_0_2px_#d8d8d8]" />
      <span className="mt-[11px] leading-[30px]">背景</span>
      <span className="mt-[7px] leading-[30px]">1</span>
      <button
        type="button"
        aria-label="添加背景"
        className="absolute bottom-[5px] flex size-[83px] items-center justify-center rounded-full border-[5px] border-[#dae8fd] bg-[#4c97ff]"
      >
        <svg viewBox="0 0 46 42" className="h-[42px] w-[46px]" fill="none" stroke="#fff" aria-hidden>
          <path d="M30 6H7a5 5 0 0 0-5 5v23a5 5 0 0 0 5 5h29a5 5 0 0 0 5-5V16" strokeWidth="4" strokeLinecap="round" />
          <path d="M3 33c3-6 8-8 12-3l2 1c5-3 8-9 13-9 4 0 6 5 10 6v8c0 2-1 3-3 3H6c-2 0-3-1-3-3z" fill="#fff" stroke="none" />
          <path d="M39 1.500v11M33.500 7h11" strokeWidth="4" strokeLinecap="round" />
        </svg>
      </button>
    </div>
  );
}

export default function App() {
  return (
    <div className="flex h-screen flex-col overflow-hidden bg-[#e6ebef] font-['Noto_Sans','Noto_Sans_CJK_SC',sans-serif]">
      <TitleBar />
      <Header />
      <main className="flex min-h-0 flex-1 gap-[9px] pr-[6px]">
        <section className="flex min-w-0 flex-1 flex-col">
          <EditorTabs />
          <Workspace />
          <button
            type="button"
            className="mr-px mt-[5px] flex h-[27px] shrink-0 items-center justify-center rounded-tr-[10px] border border-b-0 border-[#d5d9dc] bg-white pt-[2px] text-[16px] text-[#575e75]"
          >
            书包
          </button>
        </section>
        <aside className="flex w-[602px] shrink-0 flex-col">
          <StageToolbar />
          <Stage />
          <div className="mt-[10px] flex min-h-0 flex-1 gap-[10px]">
            <SpritePane />
            <StageSelector />
          </div>
        </aside>
      </main>
    </div>
  );
}
